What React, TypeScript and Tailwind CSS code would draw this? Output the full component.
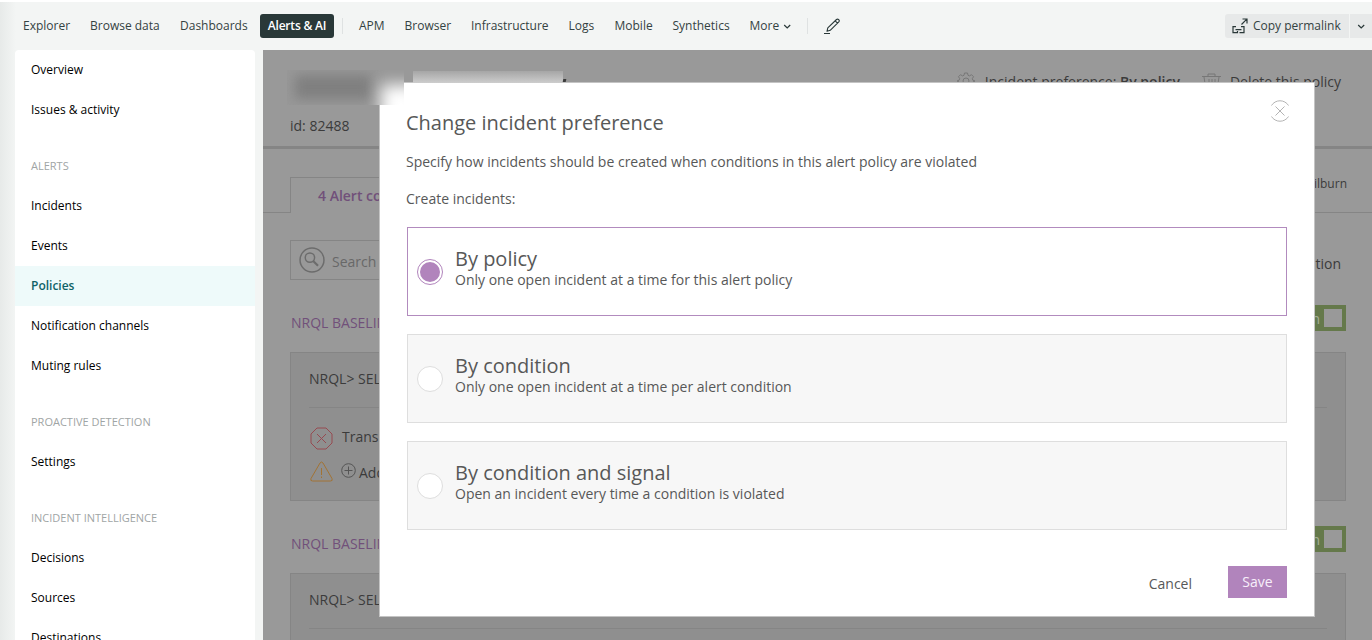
import React from "react";

const leftLinks = [
  { label: "Explorer", width: "w-[67px]" },
  { label: "Browse data", width: "w-[90px]" },
  { label: "Dashboards", width: "w-[80px]" },
];

const rightLinks = [
  { label: "APM", width: "w-[45.5px]" },
  { label: "Browser", width: "w-[66.5px]" },
  { label: "Infrastructure", width: "w-[97.5px]" },
  { label: "Logs", width: "w-[46px]" },
  { label: "Mobile", width: "w-[58px]" },
  { label: "Synthetics", width: "w-[77px]" },
];

function Chevron() {
  return (
    <svg width="9" height="9" viewBox="0 0 9 9" fill="none" stroke="#293838" strokeWidth="1.2">
      <path d="M1.2 3l3 3 3-3" />
    </svg>
  );
}

function TopNav() {
  return (
    <header className="flex h-[50px] shrink-0 items-center border-t-2 border-white pl-[23px] text-[12px] text-[#344242]">
      {leftLinks.map((l) => (
        <a key={l.label} className={`${l.width} shrink-0 whitespace-nowrap`}>{l.label}</a>
      ))}
      <a className="flex h-6 w-[74px] shrink-0 items-center justify-center rounded-[3px] bg-[#293838] font-semibold tracking-[-0.2px] whitespace-nowrap text-white">
        Alerts &amp; AI
      </a>
      <span className="ml-2 mr-4 h-4 w-px shrink-0 bg-[#dfe2e2]" />
      {rightLinks.map((l) => (
        <a key={l.label} className={`${l.width} shrink-0 whitespace-nowrap`}>{l.label}</a>
      ))}
      <a className="flex w-[57px] shrink-0 items-center gap-1">
        More <Chevron />
      </a>
      <span className="mr-4 h-4 w-px shrink-0 bg-[#dfe2e2]" />
      <svg width="17" height="17" viewBox="0 0 17 17" fill="none" stroke="#293838" strokeWidth="1.1" strokeLinejoin="round">
        <path d="M3 13.3l.8-3.500 8.700-8.300q1.100-.900 2.200.2 1.100 1.100.1 2.200L6.200 12.300zM11.200 2.800l2.300 2.300M0 15.500h6" />
      </svg>
      <div className="ml-auto flex h-6 gap-px">
        <button className="flex w-[124px] items-center rounded-l-[3px] bg-[#e7e9e9] pl-[7px] whitespace-nowrap">
          <svg className="mr-[5px]" width="16" height="16" viewBox="0 0 16 16" fill="none" stroke="#293838" strokeWidth="1.200">
            <path d="M4 8.600H1v6h4.500v-1.500M7.500 14.600H12v-6H9M3.500 11.600h6M9.500 6.500l5.300-5.300M10.500 1h4.500v4.500" />
          </svg>
          Copy permalink
        </button>
        <button className="flex w-[22px] items-center bg-[#e7e9e9] pl-[7px]"><Chevron /></button>
      </div>
    </header>
  );
}

const groups = [
  { title: "", items: ["Overview", "Issues & activity"] },
  { title: "ALERTS", items: ["Incidents", "Events", "Policies", "Notification channels", "Muting rules"] },
  { title: "PROACTIVE DETECTION", items: ["Settings"] },
  { title: "INCIDENT INTELLIGENCE", items: ["Decisions", "Sources", "Destinations"] },
];

function Sidebar() {
  return (
    <aside className="w-[240px] shrink-0 overflow-hidden rounded-t-[4px] bg-white text-[12px] text-black">
      {groups.map((g) => (
        <div key={g.title} className="mb-4">
          {g.title && <h3 className="flex h-10 items-center pl-4 text-[11px] text-[#9fa5a5]">{g.title}</h3>}
          {g.items.map((item) => (
            <a
              key={item}
              className={
                item === "Policies"
                  ? "flex h-10 items-center bg-[#eefafa] pl-4 font-semibold text-[#0d6267]"
                  : "flex h-10 items-center pl-4"
              }
            >
              {item}
            </a>
          ))}
        </div>
      ))}
    </aside>
  );
}

function ConditionCard() {
  return (
    <section className="mr-[26px] ml-[27px] h-[221px] shrink-0">
      <div className="flex h-[26px] items-center justify-between pl-px">
        <h4 className="pt-[9px] text-[14px] text-[#71507a]">NRQL BASELINE</h4>
        <div className="flex h-[26px] items-center gap-1 bg-[#65794b] pr-1 pl-3 text-[14px] text-[#a6b096]">
          On
          <span className="h-[18px] w-[18px] bg-[#999]" />
        </div>
      </div>
      <div className="mt-[21px] h-[149px] border border-[#858585] bg-[#8f8f8f] px-[18px] text-[14px] text-[#3b3b3b]">
        <div className="flex h-[55px] items-center border-b border-[#858585] pb-1">NRQL&gt; SELECT</div>
        <div className="flex h-[60px] items-center gap-[9px] pl-px">
          <svg width="23" height="23" viewBox="0 0 23 23" fill="none" stroke="#964a51">
            <path d="M7 1h9l6 6v9l-6 6H7l-6-6V7zM7 7l9 9M16 7l-9 9" />
          </svg>
          <span className="pb-1">Trans</span>
        </div>
        <div className="-mt-[10px] flex h-7 items-center pl-px">
          <svg width="23" height="22" viewBox="0 0 23 22" fill="none" stroke="#a27334" strokeLinejoin="round">
            <path d="M10 2q1.500-2 3 0l9 15.500q1 2.500-1.500 2.500h-18q-2.500 0-1.500-2.500zM11.500 7v7M11.500 15.500v1.500" />
          </svg>
          <svg className="-mt-1 mr-[3px] ml-2" width="15" height="15" viewBox="0 0 15 15" fill="none" stroke="#555">
            <circle cx="7.500" cy="7.500" r="6.800" />
            <path d="M7.500 3.500v8M3.500 7.500h8" />
          </svg>
          Add
        </div>
      </div>
    </section>
  );
}

function PolicyPage() {
  return (
    <div className="flex h-full flex-col text-[14px] text-[#3b3b3b]">
      <div className="flex h-[99px] shrink-0 flex-col border-b-[3px] border-[#858585] pl-[27px]">
        <div className="flex h-[62px] items-center justify-end pr-[31px]">
          <svg className="mr-[10px]" width="18" height="18" viewBox="0 0 18 18" fill="none" stroke="#777">
            <path d="M7.500 1h3l.5 2.300 1.500.6 2-1.200 2 2-1.200 2 .6 1.500L18 9l-2.100 1-.6 1.500 1.200 2-2 2-2-1.200-1.500.6-.5 2.100h-3L7 14.900l-1.500-.6-2 1.200-2-2 1.200-2L2.100 10 0 9l2.100-.800.600-1.500-1.200-2 2-2 2 1.200L7 3.300z" />
            <circle cx="9" cy="9" r="3" />
          </svg>
          <span>Incident preference: <b className="font-semibold">By policy</b></span>
          <svg className="mt-0.5 mr-[9px] ml-[22px]" width="19" height="18" viewBox="0 0 19 18" fill="none" stroke="#777">
            <path d="M0 3.500h19M6 3.500V1h7v2.500M2 4l2 13h11l2-13M7 6v8M10 6v8M13 6v8" />
          </svg>
          Delete this policy
        </div>
        <p className="mt-[2px] leading-6">id: 82488</p>
      </div>
      <div className="mt-7 flex h-9 shrink-0">
        <div className="w-[27px] border-b border-[#858585]" />
        <div className="flex w-[180px] items-center border border-b-0 border-[#858585] pl-[27px] font-semibold text-[#71507a]">4 Alert conditions</div>
        <div className="flex flex-1 justify-end border-b border-[#858585] pr-[25px] text-[12px] leading-[13px]">ilburn</div>
      </div>
      <div className="mt-[27px] flex h-10 shrink-0 items-center justify-between pr-[31px] pl-[27px]">
        <div className="flex h-10 w-[240px] items-center border border-[#858585] pl-2 text-[#686868]">
          <svg className="mr-[7px]" width="26" height="26" viewBox="0 0 25 25" fill="none" stroke="#6c6c6c" strokeWidth="1.400">
            <circle cx="12.500" cy="12.500" r="11.500" />
            <circle cx="10.500" cy="10.200" r="4.500" />
            <path d="M13.600 13.400l4.700 4.700" strokeWidth="2" />
          </svg>
          <span className="pt-[2px]">Search</span>
        </div>
        <span className="pt-1.5">tion</span>
      </div>
      <div className="mt-[25px] shrink-0">
        <ConditionCard />
        <ConditionCard />
      </div>
    </div>
  );
}

const options = [
  { title: "By policy", text: "Only one open incident at a time for this alert policy", selected: true },
  { title: "By condition", text: "Only one open incident at a time per alert condition", selected: false },
  { title: "By condition and signal", text: "Open an incident every time a condition is violated", selected: false },
];

function PreferenceDialog() {
  return (
    <div role="dialog" className="absolute top-[32px] left-[116px] h-[535px] w-[936px] border border-[#c4c4c4] bg-white pr-[27px] pl-[27px] text-[14px] text-[#575858]">
      <div className="flex items-start justify-between">
        <h2 className="-ml-px pt-[26px] text-[20px] leading-7">Change incident preference</h2>
        <svg className="mt-[17px] -mr-[3px]" width="20" height="22" viewBox="0 0 20 22" fill="none" stroke="#b4b4b4">
          <path d="M1.500 5.500a10 10 0 0 1 17 0M1.500 16.500a10 10 0 0 0 17 0M5.500 6.500l9 9M14.500 6.500l-9 9" />
        </svg>
      </div>
      <p className="mt-[15px] -ml-px leading-5">Specify how incidents should be created when conditions in this alert policy are violated</p>
      <p className="mt-[17px] -ml-px leading-5">Create incidents:</p>
      <div className="mt-[18px] flex flex-col gap-[18px]">
        {options.map((o) => (
          <label
            key={o.title}
            className={
              o.selected
                ? "flex h-[89px] border border-[#b28bbe] bg-white pl-[9px]"
                : "flex h-[89px] border border-[#dedede] bg-[#f7f7f7] pl-[9px]"
            }
          >
            <span
              className={
                o.selected
                  ? "mt-[31px] flex h-[26px] w-[26px] items-center justify-center rounded-full border border-[#b184bc] bg-white"
                  : "mt-[31px] h-[26px] w-[26px] rounded-full border border-[#dedede] bg-white"
              }
            >
              {o.selected && <span className="h-5 w-5 rounded-full bg-[#b184bc]" />}
            </span>
            <span className="ml-3 flex flex-col pt-[18px]">
              <span className="text-[20px] leading-[26px]">{o.title}</span>
              <span className="text-[14px] leading-4">{o.text}</span>
            </span>
          </label>
        ))}
      </div>
      <div className="mt-9 flex items-center justify-end gap-9">
        <button className="pt-[3px]">Cancel</button>
        <button className="h-8 w-[59px] bg-[#b184bc] pb-0.5 text-[#f7effa]">Save</button>
      </div>
    </div>
  );
}

export default function App() {
  return (
    <div className="flex h-[640px] w-[1372px] flex-col overflow-hidden bg-[#f3f5f4] bg-[linear-gradient(to_right,#e7eae9,#f3f5f4_16px)] font-['Open_Sans',sans-serif]">
      <TopNav />
      <div className="flex min-h-0 flex-1 pl-[15px]">
        <Sidebar />
        <main className="relative ml-2 min-w-0 flex-1 overflow-hidden bg-[#999]">
          <PolicyPage />
          <PreferenceDialog />
          <div className="absolute top-[20px] left-[24px] h-[35px] w-[117px] overflow-hidden bg-[#989898]">
            <div className="absolute top-[5px] left-[8px] h-[24px] w-[76px] bg-[#7f7f7f] blur-[6px]" />
            <div className="absolute top-[15px] left-[94px] h-[40px] w-[40px] bg-white blur-[8px]" />
          </div>
          <div className="absolute top-[21px] left-[150px] h-[12px] w-[150px] bg-[linear-gradient(to_bottom,#a6a6a6,#cdcdcd)]" />
          <div className="absolute top-[29px] left-[300px] h-[3px] w-[3px] -skew-x-12 bg-[#3b3b3b]" />
        </main>
      </div>
    </div>
  );
}
